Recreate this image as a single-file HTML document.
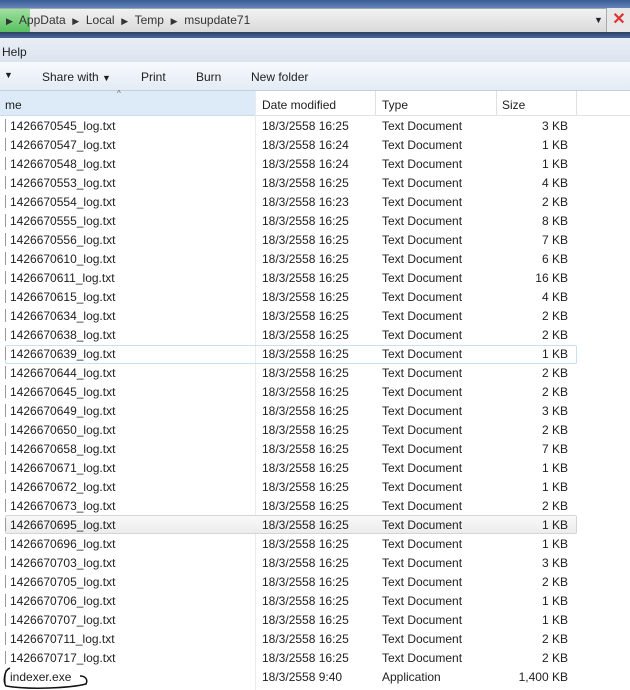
<!DOCTYPE html><html><head><style>
body{margin:0;width:630px;height:690px;overflow:hidden;background:#fff;font-family:"Liberation Sans",sans-serif;font-size:12px;color:#1e1e1e;position:relative}
.a{position:absolute}
.row{position:absolute;left:0;width:630px;height:19px;line-height:19px}
.row span{position:absolute}
</style></head><body>
<div class="a" style="left:0;top:0;width:630px;height:10px;background:linear-gradient(#3a5c95,#6d8fc3)"></div>
<div class="a" style="left:0;top:8px;width:630px;height:24px;background:linear-gradient(#f2f2f2,#d8d8d8);border-top:1px solid #9aa"></div>
<div class="a" style="left:0;top:9px;width:30px;height:23px;background:linear-gradient(#9fe0a0,#58c060)"></div>
<div class="a" style="left:6px;top:13px;font-size:12px;color:#333"><span style="font-size:9px">▶</span>&nbsp; AppData &nbsp;<span style="font-size:9px">▶</span>&nbsp; Local &nbsp;<span style="font-size:9px">▶</span>&nbsp; Temp &nbsp;<span style="font-size:9px">▶</span>&nbsp; msupdate71</div>
<div class="a" style="left:594px;top:15px;font-size:9px;color:#223">▼</div>
<div class="a" style="left:606px;top:8px;width:24px;height:24px;background:#e8e8e8;border-left:1px solid #aaa;color:#d33;font-size:16px;text-align:center;line-height:24px;font-weight:bold">✕</div>
<div class="a" style="left:0;top:32px;width:630px;height:6px;background:linear-gradient(#2a3e63,#4c6a9e)"></div>
<div class="a" style="left:0;top:38px;width:630px;height:24px;background:linear-gradient(#e9eef6,#dce4ef);border-bottom:1px solid #c9d3e0"></div>
<div class="a" style="left:2px;top:45px">Help</div>
<div class="a" style="left:0;top:62px;width:630px;height:28px;background:linear-gradient(#f7fafd,#e3ebf5);border-bottom:1px solid #c5d0de"></div>
<div class="a" style="left:4px;top:70px;font-size:9px">▼</div>
<div class="a" style="left:42px;top:70px">Share with <span style="font-size:9px">▼</span></div>
<div class="a" style="left:141px;top:70px">Print</div>
<div class="a" style="left:196px;top:70px">Burn</div>
<div class="a" style="left:251px;top:70px">New folder</div>
<div class="a" style="left:0;top:91px;width:255px;height:24px;background:#dcebf7;border-bottom:1px solid #c9dcec"></div>
<div class="a" style="left:256px;top:91px;width:374px;height:24px;border-bottom:1px solid #e3e3e3"></div>
<div class="a" style="left:117px;top:89px;font-size:8px;color:#666">^</div>
<div class="a" style="left:255px;top:91px;width:1px;height:599px;background:#ececec"></div>
<div class="a" style="left:375px;top:91px;width:1px;height:24px;background:#e0e0e0"></div>
<div class="a" style="left:496px;top:91px;width:1px;height:24px;background:#e0e0e0"></div>
<div class="a" style="left:576px;top:91px;width:1px;height:24px;background:#e0e0e0"></div>
<div class="a" style="left:5px;top:98px">me</div>
<div class="a" style="left:262px;top:98px">Date modified</div>
<div class="a" style="left:382px;top:98px">Type</div>
<div class="a" style="left:502px;top:98px">Size</div>
<div class="a" style="left:5px;top:345px;width:570px;height:17px;border:1px solid #c9dff2;border-radius:2px"></div>
<div class="a" style="left:5px;top:515px;width:570px;height:17px;border:1px solid #d5d5d5;border-radius:2px;background:linear-gradient(#f9f9f9,#ececec)"></div>
<div id="rows"></div>
<svg class="a" style="left:0;top:664px" width="100" height="26"><path d="M10 4 C4 6 3 18 6 22 C30 26 70 24 86 20 C88 16 86 12 80 12" fill="none" stroke="#111" stroke-width="1.5"/></svg>
<script>
var n=["1426670545","1426670547","1426670548","1426670553","1426670554","1426670555","1426670556","1426670610","1426670611","1426670615","1426670634","1426670638","1426670639","1426670644","1426670645","1426670649","1426670650","1426670658","1426670671","1426670672","1426670673","1426670695","1426670696","1426670703","1426670705","1426670706","1426670707","1426670711","1426670717"];
var t=["16:25","16:24","16:24","16:25","16:23","16:25","16:25","16:25","16:25","16:25","16:25","16:25","16:25","16:25","16:25","16:25","16:25","16:25","16:25","16:25","16:25","16:25","16:25","16:25","16:25","16:25","16:25","16:25","16:25"];
var s=[3,1,1,4,2,8,7,6,16,4,2,2,1,2,2,3,2,7,1,1,2,1,1,3,2,1,1,2,2];
var h="";
for(var i=0;i<30;i++){var y=117+19*i;var nm,d,ty,sz;
if(i<29){nm=n[i]+"_log.txt";d="18/3/2558 "+t[i];ty="Text Document";sz=s[i]+" KB"}else{nm="indexer.exe";d="18/3/2558 9:40";ty="Application";sz="1,400 KB"}
h+='<div class="row" style="top:'+y+'px"><span style="left:5px;top:2px;width:1px;height:13px;background:#999"></span><span style="left:10px">'+nm+'</span><span style="left:262px">'+d+'</span><span style="left:382px">'+ty+'</span><span style="right:62px">'+sz+'</span></div>';}
document.getElementById("rows").innerHTML=h;
</script>
</body></html>
